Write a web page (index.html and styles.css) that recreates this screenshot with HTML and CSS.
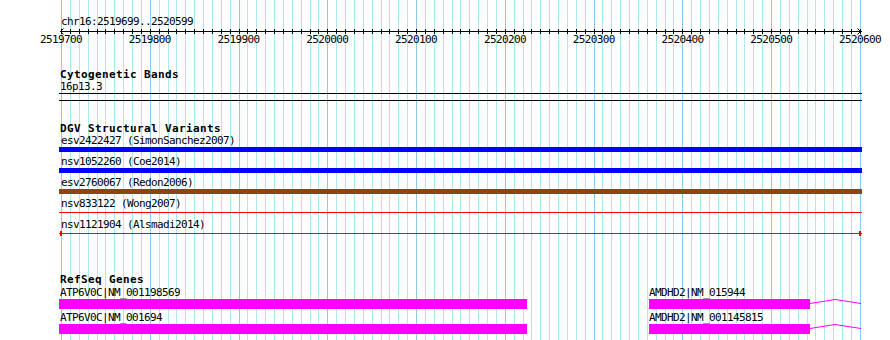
FILE: index.html
```html
<!DOCTYPE html>
<html>
<head>
<meta charset="utf-8">
<title>GBrowse chr16:2519699..2520599</title>
<link rel="stylesheet" href="styles.css">
</head>
<body>
<div class="browser">
  <div class="grid">
    <i></i><i></i><i></i><i></i><i></i><i></i><i></i><i></i><i></i><i></i>
    <i></i><i></i><i></i><i></i><i></i><i></i><i></i><i></i><i></i><i></i>
    <i></i><i></i><i></i><i></i><i></i><i></i><i></i><i></i><i></i><i></i>
    <i></i><i></i><i></i><i></i><i></i><i></i><i></i><i></i><i></i><i></i>
    <i></i><i></i><i></i><i></i><i></i><i></i><i></i><i></i><i></i><i></i>
    <i></i><i></i><i></i><i></i><i></i><i></i><i></i><i></i><i></i><i></i>
    <i></i><i></i><i></i><i></i><i></i><i></i><i></i><i></i><i></i><i></i>
    <i></i><i></i><i></i><i></i><i></i><i></i><i></i><i></i><i></i><i></i>
    <i></i><i></i><i></i><i></i><i></i><i></i><i></i><i></i><i></i><i></i>
  </div>

  <div class="content">
    <div class="ruler">
      <div class="lbl ruler-title">chr16:2519699..2520599</div>
      <div class="axis">
        <svg class="arrow arrow-left" width="5" height="7" viewBox="0 0 5 7"><polyline points="4.5,0.5 1.5,3.5 4.5,6.5" fill="none" stroke="#000" stroke-width="1"/></svg>
        <div class="ticks">
          <i></i><i></i><i></i><i></i><i></i><i></i><i></i><i></i><i></i><i></i>
          <i></i><i></i><i></i><i></i><i></i><i></i><i></i><i></i><i></i><i></i>
          <i></i><i></i><i></i><i></i><i></i><i></i><i></i><i></i><i></i><i></i>
          <i></i><i></i><i></i><i></i><i></i><i></i><i></i><i></i><i></i><i></i>
          <i></i><i></i><i></i><i></i><i></i><i></i><i></i><i></i><i></i><i></i>
          <i></i><i></i><i></i><i></i><i></i><i></i><i></i><i></i><i></i><i></i>
          <i></i><i></i><i></i><i></i><i></i><i></i><i></i><i></i><i></i><i></i>
          <i></i><i></i><i></i><i></i><i></i><i></i><i></i><i></i><i></i><i></i>
          <i></i><i></i><i></i><i></i><i></i><i></i><i></i><i></i><i></i><i></i>
        </div>
        <svg class="arrow arrow-right" width="5" height="7" viewBox="0 0 5 7"><polyline points="0.5,0.5 3.5,3.5 0.5,6.5" fill="none" stroke="#000" stroke-width="1"/></svg>
      </div>
      <div class="lbl ticklabels">
        <span>2519700</span><span>2519800</span><span>2519900</span><span>2520000</span><span>2520100</span>
        <span>2520200</span><span>2520300</span><span>2520400</span><span>2520500</span><span>2520600</span>
      </div>
    </div>

    <section class="track cyto">
      <h2 class="title">Cytogenetic Bands</h2>
      <div class="lbl name">16p13.3</div>
      <div class="band"></div>
    </section>

    <section class="track dgv">
      <h2 class="title">DGV Structural Variants</h2>
      <div class="variant">
        <div class="lbl name">esv2422427 (SimonSanchez2007)</div>
        <div class="glyph blue"></div>
      </div>
      <div class="variant">
        <div class="lbl name">nsv1052260 (Coe2014)</div>
        <div class="glyph blue"></div>
      </div>
      <div class="variant">
        <div class="lbl name">esv2760067 (Redon2006)</div>
        <div class="glyph brown"></div>
      </div>
      <div class="variant">
        <div class="lbl name">nsv833122 (Wong2007)</div>
        <div class="glyph redline"></div>
      </div>
      <div class="variant">
        <div class="lbl name">nsv1121904 (Alsmadi2014)</div>
        <div class="glyph redline capped"></div>
      </div>
    </section>

    <section class="track refseq">
      <h2 class="title">RefSeq Genes</h2>
      <div class="gene-row">
        <div class="gene clipped" style="margin-left:0px">
          <div class="lbl name">ATP6V0C|NM_001198569</div>
          <div class="model"><div class="exon" style="width:468px"></div></div>
        </div>
        <div class="gene" style="margin-left:122px">
          <div class="lbl name">AMDHD2|NM_015944</div>
          <div class="model">
            <div class="exon" style="width:161px"></div>
            <svg class="intron" width="51" height="10" viewBox="0 0 51 10"><polyline points="0,4.5 25,0.5 51,4.5" fill="none" stroke="#ff00ff" stroke-width="1"/></svg>
          </div>
        </div>
      </div>
      <div class="gene-row">
        <div class="gene clipped" style="margin-left:0px">
          <div class="lbl name">ATP6V0C|NM_001694</div>
          <div class="model"><div class="exon" style="width:468px"></div></div>
        </div>
        <div class="gene" style="margin-left:122px">
          <div class="lbl name">AMDHD2|NM_001145815</div>
          <div class="model">
            <div class="exon" style="width:161px"></div>
            <svg class="intron" width="51" height="10" viewBox="0 0 51 10"><polyline points="0,4.5 25,0.5 51,4.5" fill="none" stroke="#ff00ff" stroke-width="1"/></svg>
          </div>
        </div>
      </div>
    </section>
  </div>
</div>
</body>
</html>
```

FILE: styles.css
```css
* {
  box-sizing: border-box;
}

html, body {
  margin: 0;
  padding: 0;
  background: #ffffff;
}

body {
  width: 890px;
  height: 340px;
  overflow: hidden;
  color: #000000;
}

.browser {
  display: grid;
  grid-template-columns: 890px;
  grid-template-rows: 340px;
  width: 890px;
  height: 340px;
  overflow: hidden;
}

/* background grid */
.grid {
  grid-area: 1 / 1;
  margin-left: 61px;
  width: 800px;
  height: 340px;
  display: flex;
  border-right: 1px solid #8ecaee;
}

.grid i {
  flex: 1 1 0;
  border-left: 1px solid #aee8ee;
}

.grid i:nth-child(10n+1) {
  border-left-color: #8ecaee;
}

/* foreground */
.content {
  grid-area: 1 / 1;
  margin-left: 59px;
  width: 803px;
  padding-top: 16px;
  display: flex;
  flex-direction: column;
}

.lbl {
  font-family: "DejaVu Sans Mono", "Liberation Mono", monospace;
  font-size: 11px;
  line-height: 11px;
  height: 11px;
  letter-spacing: -0.62px;
  white-space: nowrap;
}

.title {
  margin: 0;
  padding-left: 1px;
  font-family: "DejaVu Sans Mono", "Liberation Mono", monospace;
  font-weight: bold;
  font-size: 11px;
  line-height: 11px;
  height: 11px;
  letter-spacing: 0.38px;
  white-space: nowrap;
}

/* ruler */
.ruler-title {
  padding-left: 2px;
}

.axis {
  position: relative;
  margin-top: 2px;
  height: 5px;
  background: linear-gradient(#000, #000) 1px 2px / 802px 1px no-repeat;
}

.ticks {
  margin-left: 2px;
  width: 800px;
  height: 5px;
  display: flex;
  border-right: 1px solid #000;
}

.ticks i {
  flex: 1 1 0;
  border-left: 1px solid #000;
}

.arrow {
  position: absolute;
  top: -1px;
  display: block;
}

.arrow-left {
  left: 0px;
}

.arrow-right {
  left: 798px;
}

.ticklabels {
  display: flex;
  margin-left: -42.4px;
  width: 887.8px;
}

.ticklabels span {
  flex: 1 1 0;
  text-align: center;
}

/* tracks */
.track {
  display: flex;
  flex-direction: column;
}

.name {
  padding-left: 1px;
}

.cyto {
  margin-top: 24px;
}

.cyto .name {
  margin-top: 1px;
}

.band {
  margin-top: 1px;
  height: 8px;
  border-top: 1px solid #000;
  border-bottom: 1px solid #000;
}

.dgv {
  margin-top: 22px;
}

.dgv .title {
  margin-bottom: 1px;
}

.variant {
  margin-bottom: 4px;
}

.variant .name {
  padding-left: 2px;
}

.glyph {
  margin-top: 1px;
  height: 5px;
  width: 803px;
}

.glyph.blue {
  background: #0000ff;
}

.glyph.brown {
  background: #8b4513;
}

.glyph.redline {
  background: linear-gradient(#ff0000, #ff0000) 0 2px / 100% 1px no-repeat;
}

.glyph.redline.capped {
  background:
    linear-gradient(#ff0000, #ff0000) 1px 0 / 2px 5px no-repeat,
    linear-gradient(#ff0000, #ff0000) 800px 0 / 2px 5px no-repeat,
    linear-gradient(#ff0000, #ff0000) 0 2px / 100% 1px no-repeat;
}

.refseq {
  margin-top: 34px;
}

.gene-row {
  display: flex;
  margin-top: 2px;
  margin-bottom: 1px;
}

.gene {
  display: flex;
  flex-direction: column;
}

.gene .name {
  padding-left: 0;
  margin-bottom: 1px;
}

.gene.clipped .name {
  padding-left: 1px;
}

.model {
  display: flex;
  height: 10px;
}

.exon {
  height: 10px;
  background: #ff00ff;
}

.intron {
  display: block;
}
```
